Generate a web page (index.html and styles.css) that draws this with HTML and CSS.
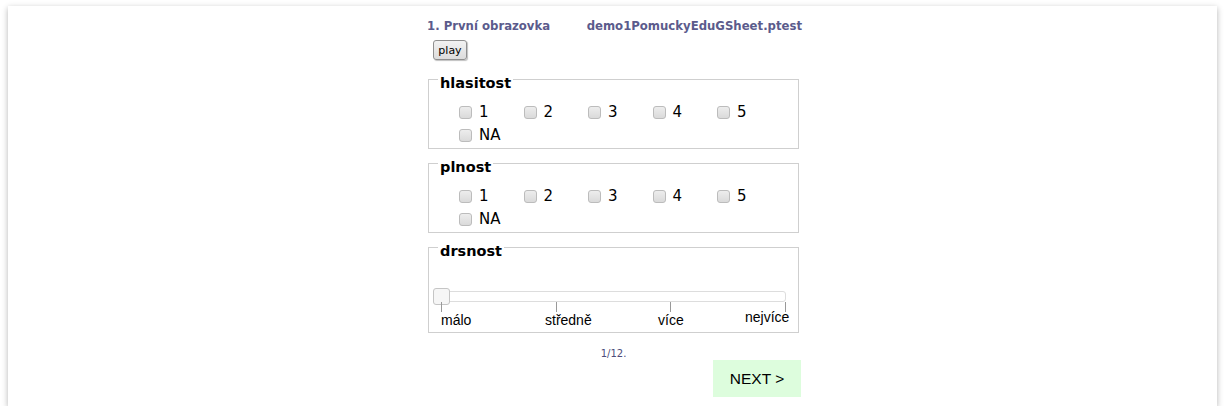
FILE: index.html
```html
<!DOCTYPE html>
<html lang="cs">
<head>
<meta charset="utf-8">
<title>demo1PomuckyEduGSheet</title>
<link rel="stylesheet" href="styles.css">
</head>
<body>
<div class="card">
  <div class="column">
    <div class="header">
      <span>1. První obrazovka</span>
      <span>demo1PomuckyEduGSheet.ptest</span>
    </div>
    <div class="play-row"><button class="play" type="button">play</button></div>

    <fieldset class="group">
      <legend>hlasitost</legend>
      <div class="choices">
        <label class="choice"><input type="checkbox"><span>1</span></label>
        <label class="choice"><input type="checkbox"><span>2</span></label>
        <label class="choice"><input type="checkbox"><span>3</span></label>
        <label class="choice"><input type="checkbox"><span>4</span></label>
        <label class="choice"><input type="checkbox"><span>5</span></label>
        <label class="choice"><input type="checkbox"><span>NA</span></label>
      </div>
    </fieldset>

    <fieldset class="group">
      <legend>plnost</legend>
      <div class="choices">
        <label class="choice"><input type="checkbox"><span>1</span></label>
        <label class="choice"><input type="checkbox"><span>2</span></label>
        <label class="choice"><input type="checkbox"><span>3</span></label>
        <label class="choice"><input type="checkbox"><span>4</span></label>
        <label class="choice"><input type="checkbox"><span>5</span></label>
        <label class="choice"><input type="checkbox"><span>NA</span></label>
      </div>
    </fieldset>

    <fieldset class="group">
      <legend>drsnost</legend>
      <div class="slider">
        <div class="track"><span class="handle"></span></div>
        <div class="ticks"><i></i><i></i><i></i><i></i></div>
        <div class="scale">
          <span>málo</span>
          <span>středně</span>
          <span>více</span>
          <span class="last">nejvíce</span>
        </div>
      </div>
    </fieldset>

    <div class="counter">1/12.</div>
    <div class="next-row"><button class="next" type="button">NEXT &gt;</button></div>
  </div>
</div>
</body>
</html>
```

FILE: styles.css
```css
html, body {
  margin: 0;
  padding: 0;
  background: #ffffff;
}

body {
  padding: 6px 8px 0;
  font-family: "DejaVu Sans", Verdana, sans-serif;
  color: #000;
}

.card {
  height: 400px;
  background: #fff;
  box-shadow: 0 2px 6px rgba(0, 0, 0, 0.3);
  display: flex;
  flex-direction: column;
  align-items: center;
  padding-left: 2px;
  box-sizing: border-box;
}

.column {
  width: 371px;
  display: flex;
  flex-direction: column;
}

.header {
  display: flex;
  justify-content: space-between;
  width: 375px;
  margin-left: -1px;
  margin-top: 12px;
  font-size: 11.7px;
  line-height: 16px;
  font-weight: bold;
  color: #5b5b8c;
}

.play-row {
  margin-top: 6px;
  padding-left: 5px;
  height: 22px;
}

.play {
  display: block;
  font-family: "DejaVu Sans", Verdana, sans-serif;
  font-size: 11px;
  height: 20px;
  width: 34px;
  padding: 0;
  border: 1px solid #8f8f8f;
  border-radius: 3px;
  background: linear-gradient(#f2f2f2, #dcdcdc);
  box-shadow: 1px 1px 1px rgba(0, 0, 0, 0.25);
  color: #000;
}

.group {
  margin: 6px 0 0;
  padding: 0 0 1px 30px;
  border: 1px solid #cfcfcf;
  min-width: 0;
}

.group + .group {
  margin-top: 3px;
}

.group legend {
  padding: 8px 2px 0;
  margin-left: -21px;
  font-size: 14.5px;
  line-height: 14px;
  font-weight: bold;
}

.choices {
  display: grid;
  grid-template-columns: repeat(5, 64.5px);
  padding-top: 11px;
  font-size: 15px;
  line-height: 23px;
}

.choice {
  display: flex;
  align-items: center;
  gap: 7px;
}

.choice input {
  appearance: none;
  -webkit-appearance: none;
  width: 13px;
  height: 13px;
  margin: 0;
  border: 1px solid #bcbcbc;
  border-radius: 3px;
  background: linear-gradient(#ededed, #dadada);
  box-sizing: border-box;
}

.slider {
  margin-left: -18px;
  padding-top: 33px;
  width: 345px;
}

.track {
  height: 11px;
  border: 1px solid #dddddd;
  border-radius: 3px;
  background: #fff;
  box-sizing: border-box;
  display: flex;
  align-items: center;
}

.handle {
  display: block;
  width: 17px;
  height: 17px;
  margin-left: -9px;
  box-sizing: border-box;
  border: 1px solid #c5c5c5;
  border-radius: 3px;
  background: #f6f6f6;
}

.ticks {
  display: flex;
  justify-content: space-between;
  height: 10px;
}

.ticks i {
  display: block;
  width: 1px;
  height: 10px;
  background: #999;
}

.scale {
  display: grid;
  grid-template-columns: 104px 113px 87px auto;
  font-family: "Liberation Sans", Arial, sans-serif;
  font-size: 14px;
  line-height: 16px;
  padding-bottom: 3px;
}

.scale .last {
  margin-top: -3px;
  white-space: nowrap;
}

.counter {
  margin-top: 15px;
  text-align: center;
  font-size: 10px;
  line-height: 12px;
  color: #4d4d7a;
}

.next-row {
  display: flex;
  justify-content: flex-end;
  margin-right: -2px;
  margin-top: 0;
}

.next {
  width: 88px;
  height: 37px;
  border: none;
  background: #ddfddd;
  font-family: "Liberation Sans", Arial, sans-serif;
  font-size: 15.5px;
  color: #000;
  padding: 0;
}
```
